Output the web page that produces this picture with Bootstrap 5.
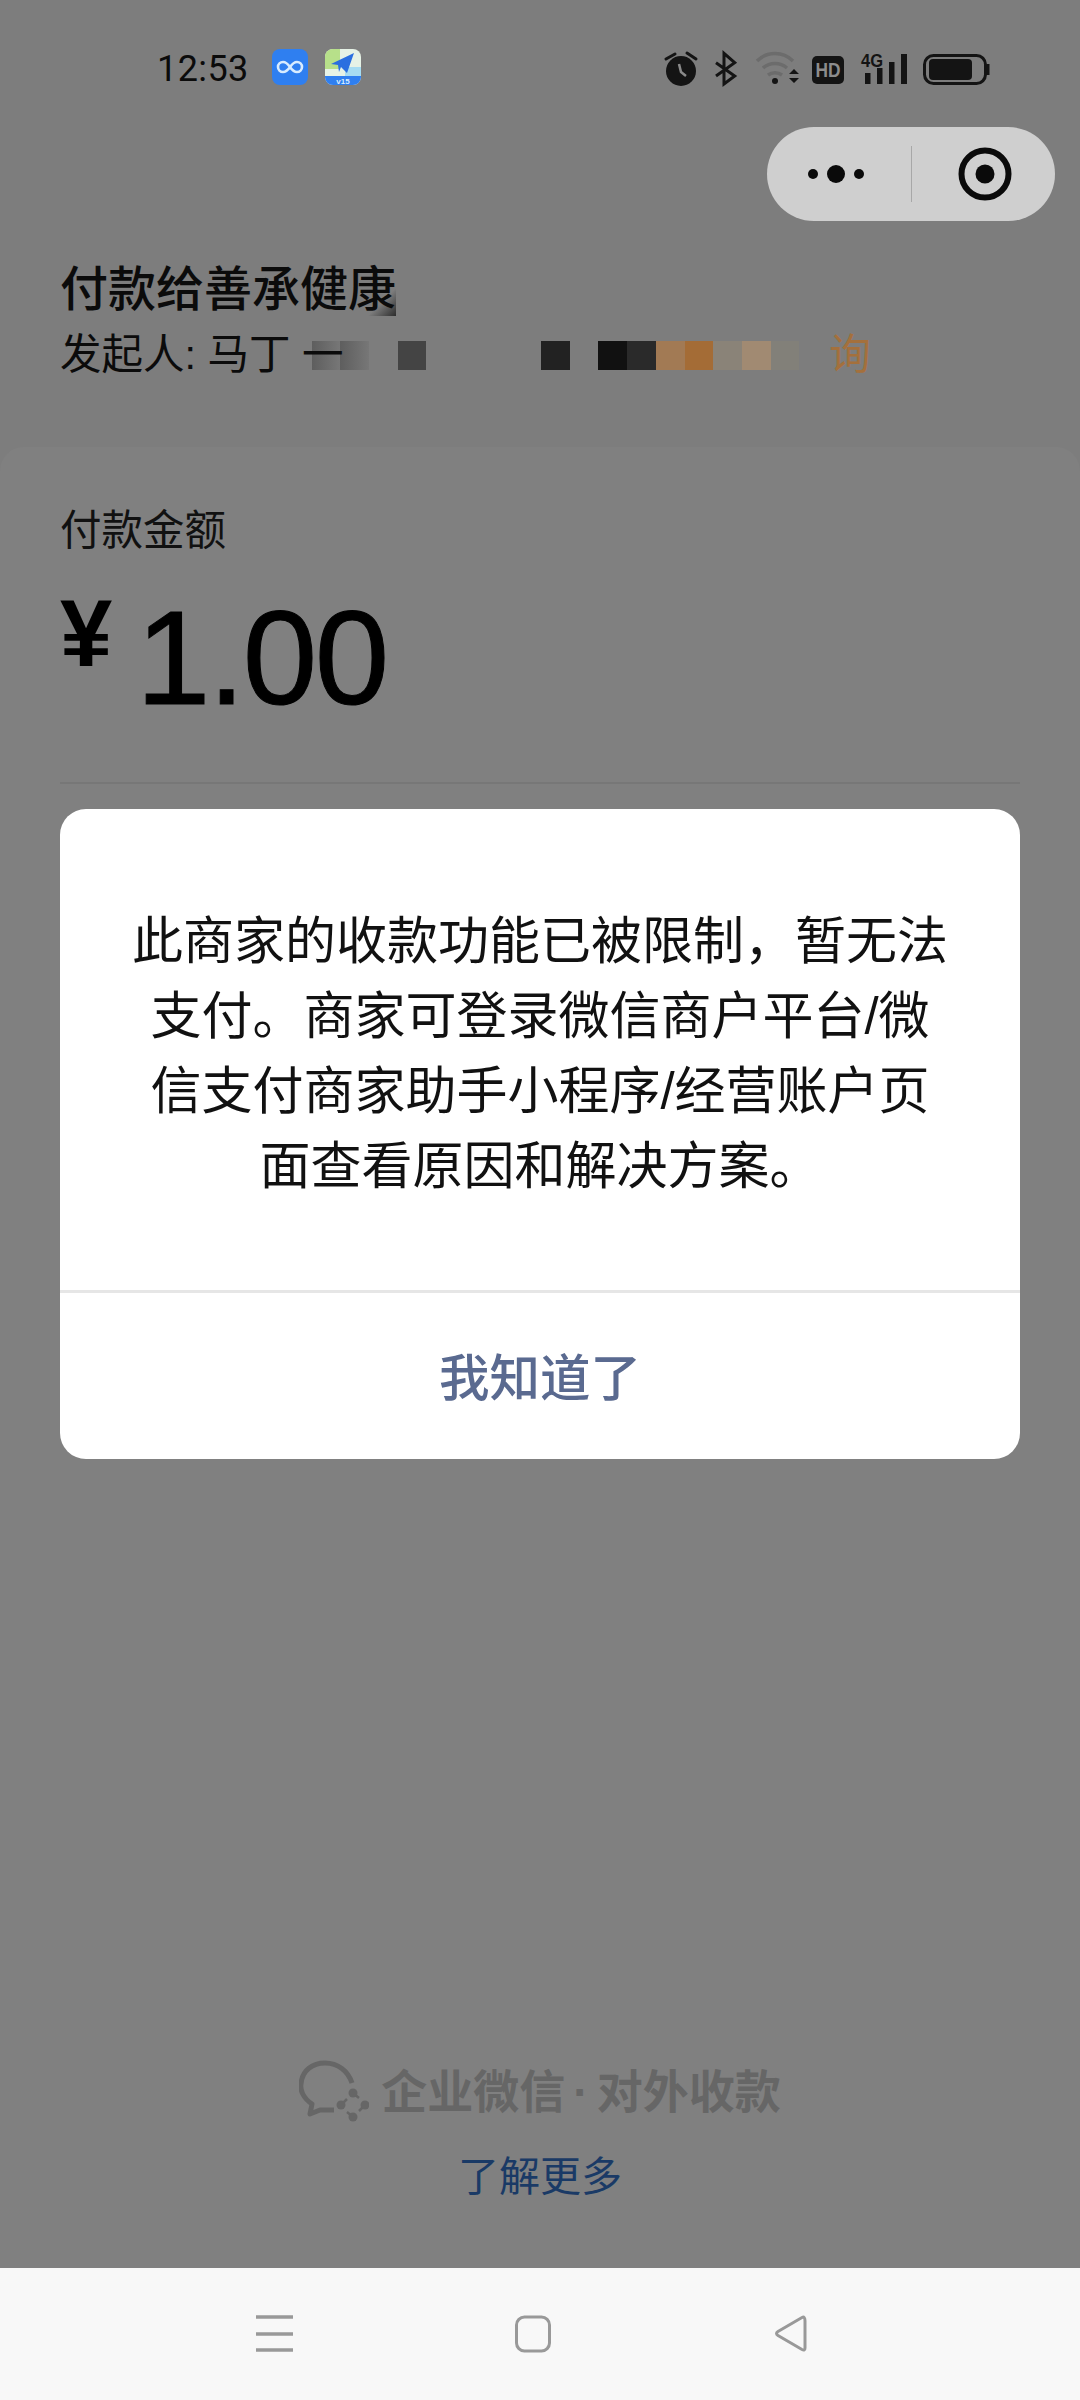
<!doctype html>
<html lang="zh">
<head>
<meta charset="utf-8">
<link href="https://cdn.jsdelivr.net/npm/bootstrap@5.3.0/dist/css/bootstrap.min.css" rel="stylesheet">
<style>
html,body{margin:0;background:#7d7d7d}
body{font-family:"Liberation Sans","Noto Sans CJK SC",sans-serif;color:#0b0b0b}
.screen{width:1080px;height:2400px;background:#7d7d7d;position:relative;overflow:hidden}
.statusbar{height:127px;padding:0 80px 0 157px}
.clock{font-family:Roboto,sans-serif;font-size:36px;line-height:1;letter-spacing:.4px;margin-right:23px;padding-top:5px}
.statusbar svg{display:block}
.sb-left{padding-top:46px;align-items:center}
.gap-17{margin-right:17px}
.capsule-row{padding-right:25px;height:94px}
.capsule{width:288px;height:94px;border-radius:47px;background:#cfcfcf}
.capsule-half{width:144px}
.capsule-half-r{padding-left:3px}
.capsule-rule{width:1px;height:56px;background:#a8a8a8}
.head-block{padding:35px 60px 0;height:226px}
.pay-title{font-size:48px;line-height:68px;font-weight:500;letter-spacing:0}
.pay-corner{background:linear-gradient(135deg,transparent 72%,#2c2c2c 100%)}
.pay-sub{font-size:41.5px;line-height:60px;margin-top:1px;height:60px}
.pay-who{position:relative;z-index:1}
.pix{width:28.7px;height:29px;flex:none}
.pix-row{margin-left:-32px;margin-top:1px}
.pg{background:linear-gradient(90deg,#5e5e5e,#777)}
.p1{background:#444}.p2{background:#222}.p3{background:#111}.p4{background:#2a2a2a}
.p5{background:#a27a54}.p6{background:#a46c36}.p7{background:#8a8378}.p8{background:#a18a72}
.p9{background:#828079}
.xun{color:#a4703c;margin-left:30px}
.sheet{height:1950px;background:#808080;border-radius:24px 24px 0 0;padding:54px 60px 0}
.amt-label{font-size:41.5px;line-height:60px;color:#111}
.amt{height:150px;margin-top:30px}
.amt-sign{font-size:94px;line-height:1;font-weight:700;width:76px;margin-top:-4px;color:#000}
.amt-num{font-size:134px;line-height:150px;letter-spacing:-2.500px;margin-top:-8px;color:#000;-webkit-text-stroke:1px #000}
.amt-rule{margin:41px 0 0;height:2px;background:#777;opacity:1;border:0}
.dialog{position:absolute;left:60px;top:809px;width:960px;height:650px;border:0;border-radius:26px;background:#fff}
.dialog-body{height:484px;padding:95px 68px 0;font-size:51px;line-height:75px;text-align:center;color:#111;border-bottom:3px solid #e6e6e6}
.dialog-btn{height:166px;font-size:50.5px;color:#5a6a90;font-weight:500;background:transparent;border:0;padding:5px 0 0}
.foot{position:absolute;left:0;right:0;top:2059px}
.foot-brand{font-size:46px;line-height:66px;color:#666;font-weight:700;gap:12px}
.foot-dot{margin:0 8px}
.foot-link{font-size:41px;line-height:60px;color:#1a3a66;text-decoration:none;margin-top:22px;display:block;text-align:center}
.navdock{position:absolute;left:0;right:0;bottom:0;height:132px;background:#f8f8f8;padding:47px 0 0 255px}
</style>
</head>
<body>
<div class="screen">
  <div class="statusbar d-flex justify-content-between align-items-start">
    <div class="d-flex sb-left">
      <span class="clock">12:53</span>
      <svg width="36" height="36" viewBox="0 0 36 36" class="gap-17"><rect width="36" height="36" rx="8" fill="#2f7ff0"/><path d="M18 18c-2.500-3.600-4.500-5-7-5a5 5 0 0 0 0 10c2.500 0 4.500-1.400 7-5s4.500-5 7-5a5 5 0 0 1 0 10c-2.500 0-4.500-1.400-7-5z" fill="none" stroke="#d8ecff" stroke-width="2.600"/></svg>
      <svg width="36" height="36" viewBox="0 0 36 36"><defs><clipPath id="ic"><rect width="36" height="36" rx="8"/></clipPath></defs><g clip-path="url(#ic)"><rect width="36" height="36" fill="#e6f2e6"/><rect width="15" height="20" fill="#b7e08a"/><rect x="20" y="18" width="16" height="10" fill="#a6dcf2"/><rect y="27" width="36" height="9" fill="#2f7ff0"/><path d="M6 15 29 4 22 24 16 18 14 23 13 16z" fill="#2a6fe0"/><text x="18" y="35" text-anchor="middle" font-size="8" font-weight="700" fill="#d8ecff" font-family="Liberation Sans">v15</text></g></svg>
    </div>
    <svg width="350" height="127" viewBox="650 0 350 127">
      <circle cx="681" cy="71" r="15" fill="#141414"/>
      <path d="M666 59l9-5M687 53l9 6" stroke="#141414" stroke-width="3" stroke-linecap="round"/>
      <path d="M679 64l2 8 5 4" stroke="#8a8a8a" stroke-width="2.500" fill="none"/>
      <path d="M716 62.700L734.700 76 724 84V53.300L734.700 62.700 716 76" fill="none" stroke="#141414" stroke-width="3"/>
      <path d="M757 61c10-10 26-10 36 0M763 68c7-6 17-6 24 0M768 75c4-3 10-3 14 0" fill="none" stroke="#6c6c6c" stroke-width="3.500"/>
      <circle cx="775" cy="81" r="3" fill="#141414"/>
      <path d="M789 74l5-5 5 5zM789 78l5 5 5-5z" fill="#141414"/>
      <rect x="812" y="56" width="32" height="28" rx="5" fill="#141414"/>
      <text x="828" y="77" text-anchor="middle" font-size="20" font-weight="700" fill="#8c8c8c" font-family="Liberation Sans" textLength="25" lengthAdjust="spacingAndGlyphs">HD</text>
      <text x="861" y="67" font-size="18" font-weight="700" fill="#141414" font-family="Liberation Sans" textLength="22" lengthAdjust="spacingAndGlyphs">4G</text>
      <rect x="865" y="73" width="5.500" height="11" fill="#141414"/><rect x="877" y="68" width="5.500" height="16" fill="#141414"/><rect x="889" y="62" width="5.500" height="22" fill="#141414"/><rect x="901" y="54" width="6" height="30" fill="#141414"/>
      <rect x="924.500" y="55.500" width="61" height="28" rx="9" fill="none" stroke="#141414" stroke-width="3"/>
      <rect x="929" y="59" width="43" height="21" rx="4" fill="#141414"/>
      <rect x="987" y="64" width="2.500" height="11" fill="#141414"/>
    </svg>
  </div>
  <div class="d-flex justify-content-end capsule-row">
    <div class="capsule d-flex align-items-center">
      <div class="capsule-half d-flex justify-content-center">
        <svg width="62" height="20" viewBox="0 0 62 20"><circle cx="5" cy="10" r="5" fill="#0a0a0a"/><circle cx="28" cy="10" r="9" fill="#0a0a0a"/><circle cx="51" cy="10" r="5" fill="#0a0a0a"/></svg>
      </div>
      <div class="capsule-rule"></div>
      <div class="capsule-half capsule-half-r d-flex justify-content-center">
        <svg width="56" height="56" viewBox="0 0 56 56"><circle cx="28" cy="28" r="23.500" fill="none" stroke="#0a0a0a" stroke-width="6"/><circle cx="28" cy="28" r="9.500" fill="#0a0a0a"/></svg>
      </div>
    </div>
  </div>
  <div class="head-block">
    <div class="pay-title">付款给善承健<span class="pay-corner">康</span></div>
    <div class="pay-sub d-flex align-items-center">
      <span class="pay-who">发起人: 马丁 一</span>
      <div class="d-flex pix-row">
        <div class="pix pg"></div><div class="pix pg"></div><div class="pix"></div><div class="pix p1"></div><div class="pix"></div><div class="pix"></div><div class="pix"></div><div class="pix"></div><div class="pix p2"></div><div class="pix"></div><div class="pix p3"></div><div class="pix p4"></div><div class="pix p5"></div><div class="pix p6"></div><div class="pix p7"></div><div class="pix p8"></div><div class="pix p9"></div>
      </div>
      <span class="xun">询</span>
    </div>
  </div>
  <div class="sheet">
    <div class="amt-label">付款金额</div>
    <div class="amt d-flex align-items-start">
      <span class="amt-sign">¥</span>
      <span class="amt-num">1.00</span>
    </div>
    <hr class="amt-rule">
  </div>
  <div class="dialog card">
    <div class="dialog-body">此商家的收款功能已被限制，暂无法支付。商家可登录微信商户平台/微信支付商家助手小程序/经营账户页面查看原因和解决方案。</div>
    <button type="button" class="btn dialog-btn w-100">我知道了</button>
  </div>
  <div class="foot">
    <div class="foot-brand d-flex justify-content-center align-items-center">
      <svg width="70" height="66" viewBox="8 5 70 66"><path d="M43 56H29L19 60 21 50C12 44 9 36 10 30 11 16 22 9 34 9 47 9 57 17 61 29" fill="none" stroke="#666" stroke-width="5" stroke-linejoin="round"/><path d="M62 39l6 5M74 51l-6 6M62 63l-6-5M50 51l6-6" stroke="#666" stroke-width="2.500" fill="none"/><circle cx="62" cy="39" r="4.500" fill="#666"/><circle cx="50" cy="51" r="4.500" fill="#666"/><circle cx="74" cy="51" r="4.500" fill="#666"/><circle cx="62" cy="63" r="4.500" fill="#666"/></svg>
      <span>企业微信<span class="foot-dot">·</span>对外收款</span>
    </div>
    <a class="foot-link" href="#">了解更多</a>
  </div>
  <div class="navdock d-flex">
    <svg width="560" height="40" viewBox="255 2315 560 40">
      <path d="M256 2317h37M256 2334h37M256 2350h37" stroke="#999" stroke-width="3.500" fill="none"/>
      <rect x="516.500" y="2317" width="33" height="34" rx="8" fill="none" stroke="#999" stroke-width="3"/>
      <path d="M805 2321v27q0 3-3 1.500l-24-14q-3-2 0-4l24-14q3-1.500 3 3.500z" fill="none" stroke="#999" stroke-width="3"/>
    </svg>
  </div>
</div>
<script src="https://cdn.jsdelivr.net/npm/bootstrap@5.3.0/dist/js/bootstrap.bundle.min.js"></script>
</body>
</html>
